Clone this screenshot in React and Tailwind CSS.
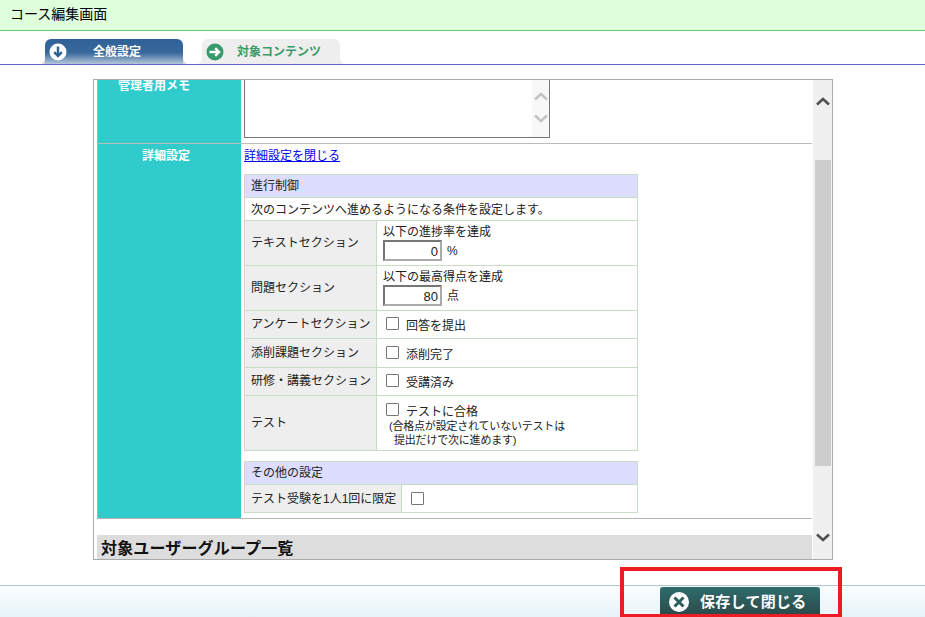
const jp = "font-['Arial','Noto_Sans_CJK_JP','sans-serif']";

function ArrowCircle({ dir, bg, fg }) {
  return (
    <svg width="18" height="18" viewBox="0 0 18 18" className="shrink-0">
      <circle cx="9" cy="9" r="8.5" fill={bg} />
      {dir === "down" ? (
        <path d="M9 3.5V13M5.2 9.2 9 13l3.8-3.8" fill="none" stroke={fg} strokeWidth="2.4" />
      ) : (
        <path d="M3.5 9H13M9.2 5.2 13 9l-3.8 3.8" fill="none" stroke={fg} strokeWidth="2.4" />
      )}
    </svg>
  );
}

function Chevron({ up, color, w = 2.6 }) {
  return (
    <svg width="14" height="9" viewBox="0 0 14 9">
      <path d={up ? "M1 7.5 7 2l6 5.5" : "M1 1.5 7 7l6-5.5"} fill="none" stroke={color} strokeWidth={w} />
    </svg>
  );
}

function Flare({ side, color }) {
  return (
    <svg
      width="5"
      height="9"
      viewBox="0 0 5 9"
      className={side === "left" ? "absolute -left-[5px] bottom-0" : "absolute -right-[5px] bottom-0 -scale-x-100"}
    >
      <path d="M0 9C3 9 5 6 5 0V9Z" fill={color} />
    </svg>
  );
}

function Box({ className = "" }) {
  return <span className={`inline-block w-[13px] h-[13px] border border-[#767676] rounded-[1px] bg-white shrink-0 ${className}`} />;
}

function Row({ h, label, children, lift }) {
  return (
    <div className={`flex border-b border-[#c8dcc8] ${h}`}>
      <div className={`w-[132px] shrink-0 bg-[#eeeeee] border-r border-[#c8dcc8] flex items-center pl-[6px] whitespace-nowrap ${lift ? "pb-[2px]" : ""}`}>{label}</div>
      <div className="flex-1 min-w-0">{children}</div>
    </div>
  );
}

function NumInput({ value, unit }) {
  return (
    <div className="flex items-center h-[21px] pl-[6px]">
      <div className="w-[59px] h-[21px] border-2 border-t-[#767676] border-l-[#767676] border-r-[#aaaaaa] border-b-[#aaaaaa] bg-white text-right pr-[2px] pt-[1px] text-[13px] leading-[17px] text-[#222]">{value}</div>
      <span className="ml-[5px]">{unit}</span>
    </div>
  );
}

function CheckRow({ text }) {
  return (
    <div className="flex items-center h-full pl-[9px] gap-[7px]">
      <Box className="-mt-[2px]" />
      <span className="mt-[3px]">{text}</span>
    </div>
  );
}

export default function App() {
  return (
    <div className={`${jp} relative w-[925px] h-[617px] overflow-hidden bg-white flex flex-col text-[12px] leading-[16px] text-[#222]`}>
      <header className="h-[31px] shrink-0 bg-[#dfffdc] border-b border-[#6cc46c] pl-[10px] pt-[4px] text-[14px] leading-[20px] text-black">コース編集画面</header>

      <nav className="h-[34px] shrink-0 border-b border-[#6464d2] flex items-end pl-[45px] gap-[19px]">
        <div className="relative w-[138px] h-[25px] rounded-t-[6px] bg-[linear-gradient(to_bottom,#2f6298_0%,#38699c_55%,#b4c6d8_100%)] flex items-center pl-[4px] text-white font-bold">
          <Flare side="left" color="#d8d8d8" />
          <Flare side="right" color="#d8d8d8" />
          <ArrowCircle dir="down" bg="#ffffff" fg="#2f6298" />
          <span className="ml-[26px]">全般設定</span>
        </div>
        <div className="relative w-[138px] h-[25px] rounded-t-[6px] bg-[#eeeeee] flex items-center pl-[4px] text-[#3a9a68] font-bold">
          <Flare side="left" color="#eeeeee" />
          <Flare side="right" color="#eeeeee" />
          <ArrowCircle dir="right" bg="#38996a" fg="#ffffff" />
          <span className="ml-[13px]">対象コンテンツ</span>
        </div>
      </nav>

      <main className="ml-[93px] mt-[14px] w-[740px] h-[481px] shrink-0 border border-[#aaaaaa] flex overflow-hidden">
        <div className="w-[718px] shrink-0 overflow-hidden pl-[3px]">
          <div className="-mt-[1px] border-r border-b border-[#b4b4b4] w-[716px]">
            <div className="flex h-[65px] border-b border-[#bbbbbb] border-l border-l-[#b4b4b4]">
              <div className="w-[143px] shrink-0 bg-[#30cccc] text-white font-bold text-right pr-[51px] overflow-hidden">
                <div className="-mt-[1px]">管理者用メモ</div>
              </div>
              <div className="pl-[3px]">
                <div className="w-[306px] h-[59px] border-r border-b border-l border-[#767676] flex justify-end">
                  <div className="w-[17px] bg-[#f8f8f8] flex flex-col items-center pt-[13px] gap-[13px]">
                    <Chevron up color="#c4c4c4" />
                    <Chevron color="#c4c4c4" />
                  </div>
                </div>
              </div>
            </div>

            <div className="flex h-[374px] border-l border-[#b4b4b4]">
              <div className="w-[143px] shrink-0 bg-[#30cccc] text-white font-bold text-right pr-[51px] pt-[4px]">詳細設定</div>
              <div className="pl-[3px] pt-[4px] flex-1">
                <a className="text-[#0000ee] underline block h-[16px]" href="#">詳細設定を閉じる</a>
                <div className="mt-[10px] w-[394px] border border-[#c8dcc8]">
                  <div className="h-[23px] bg-[#ddddff] border-b border-[#c8dcc8] pl-[6px] pt-[3px]">進行制御</div>
                  <div className="h-[23px] border-b border-[#c8dcc8] pl-[6px] pt-[4px]">次のコンテンツへ進めるようになる条件を設定します。</div>
                  <Row h="h-[45px]" label="テキストセクション">
                    <div className="pl-[6px] pt-[3px] h-[19px]">以下の進捗率を達成</div>
                    <NumInput value="0" unit="%" />
                  </Row>
                  <Row h="h-[45px]" label="問題セクション">
                    <div className="pl-[6px] pt-[3px] h-[19px]">以下の最高得点を達成</div>
                    <NumInput value="80" unit="点" />
                  </Row>
                  <Row h="h-[28px]" lift label="アンケートセクション"><CheckRow text="回答を提出" /></Row>
                  <Row h="h-[29px]" label="添削課題セクション"><CheckRow text="添削完了" /></Row>
                  <Row h="h-[28px]" lift label="研修・講義セクション"><CheckRow text="受講済み" /></Row>
                  <div className="flex h-[54px]">
                    <div className="w-[132px] shrink-0 bg-[#eeeeee] border-r border-[#c8dcc8] flex items-center pl-[6px]">テスト</div>
                    <div className="flex-1">
                      <div className="flex items-center pl-[9px] gap-[7px] pt-[7px] h-[22px]">
                        <Box className="-mt-[3px]" />
                        <span className="mt-[2px]">テストに合格</span>
                      </div>
                      <div className="pl-[12px] pt-[1px] text-[11px] leading-[14px] tracking-[-0.2px]">
                        <div>(合格点が設定されていないテストは</div>
                        <div className="pl-[5px]">提出だけで次に進めます)</div>
                      </div>
                    </div>
                  </div>
                </div>

                <div className="mt-[10px] w-[394px] border border-[#c8dcc8]">
                  <div className="h-[23px] bg-[#ddddff] border-b border-[#c8dcc8] pl-[6px] pt-[3px]">その他の設定</div>
                  <div className="flex h-[27px]">
                    <div className="w-[157px] shrink-0 bg-[#eeeeee] border-r border-[#c8dcc8] flex items-center pl-[6px] whitespace-nowrap">テスト受験を1人1回に限定</div>
                    <div className="flex items-center pl-[9px]"><Box /></div>
                  </div>
                </div>
              </div>
            </div>
          </div>
          <div className="mt-[16px] h-[30px] bg-[#dddddd] pl-[4px] pt-[4px] text-[16px] leading-[20px] tracking-[0.15px] font-bold text-[#111]">対象ユーザーグループ一覧</div>
        </div>

        <aside className="w-[20px] shrink-0 ml-[1px] bg-[#f0f0f0] flex flex-col items-center">
          <div className="h-[44px] flex items-start pt-[17px] shrink-0"><Chevron up color="#505050" /></div>
          <div className="w-[16px] h-[306px] mt-[36px] bg-[#cdcdcd]" />
          <div className="mt-auto h-[34px] flex items-start pt-[8px] shrink-0"><Chevron color="#505050" /></div>
        </aside>
      </main>

      <footer className="mt-auto h-[32px] shrink-0 border-t border-[#b0c4d4] bg-gradient-to-b from-[#fbfdfe] to-[#e6f3f9] flex items-start pl-[660px] pt-[1px]">
        <div className="w-[160px] h-[34px] rounded-t-[3px] bg-gradient-to-b from-[#2f6c6c] to-[#2a4444] flex items-start pl-[9px] pt-[5px] text-white font-bold">
          <svg width="20" height="20" viewBox="0 0 20 20" className="shrink-0">
            <circle cx="10" cy="10" r="10" fill="#ffffff" />
            <path d="M5.5 5.5l9 9M14.5 5.5l-9 9" stroke="#2f5f5f" strokeWidth="3" fill="none" />
          </svg>
          <span className="ml-[11px] text-[15px] leading-[20px] tracking-[0.3px]">保存して閉じる</span>
        </div>
      </footer>

      <div className="absolute left-[620px] top-[567px] w-[222px] h-[50px] border-4 border-[#ed1c24] border-b-[3px] pointer-events-none" />
    </div>
  );
}
